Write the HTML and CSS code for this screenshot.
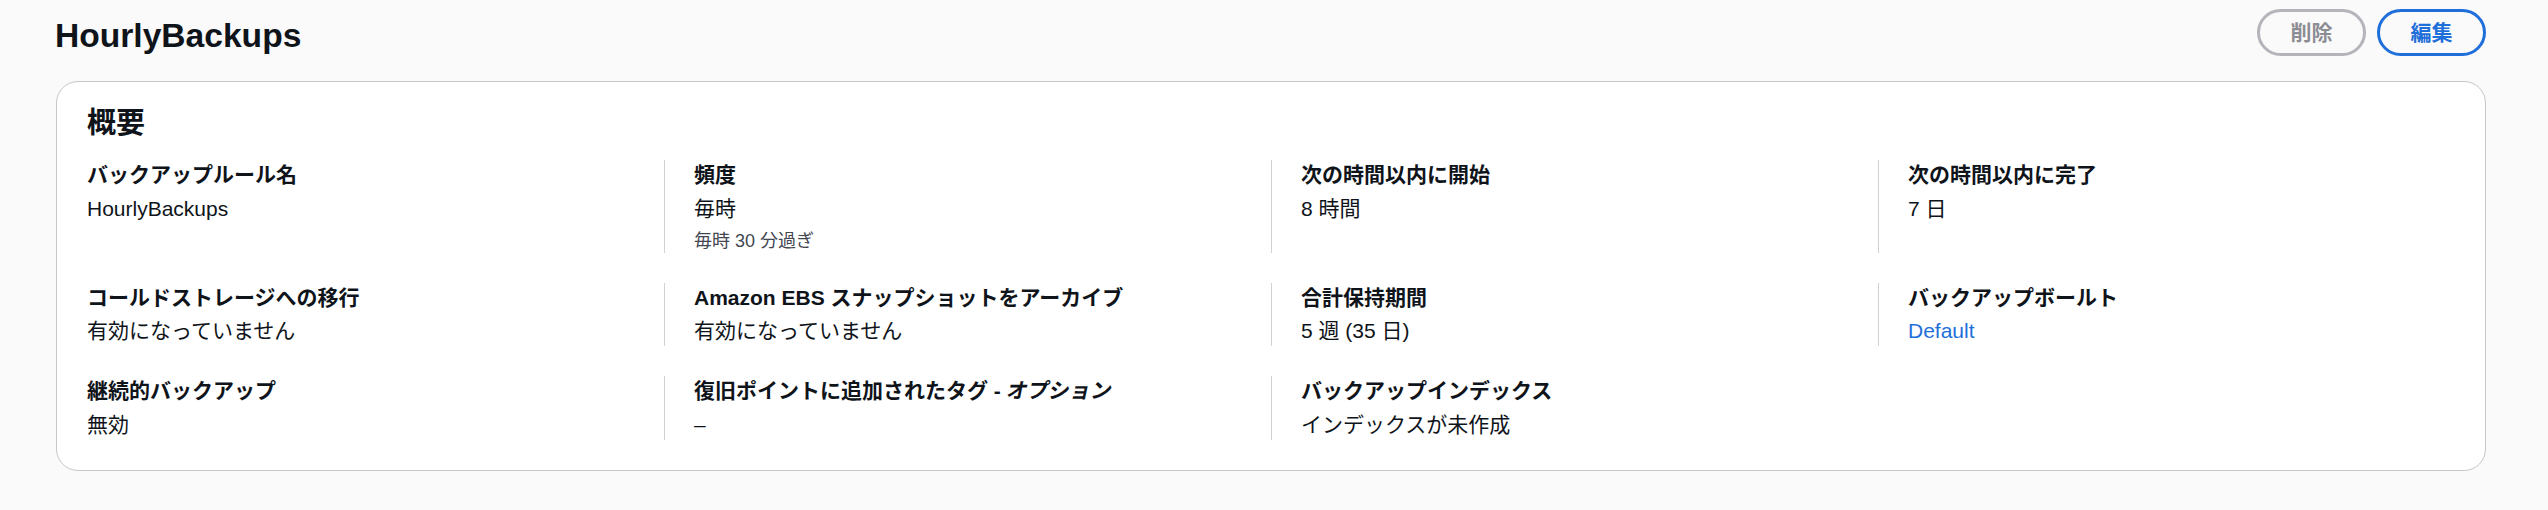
FILE: index.html
```html
<!DOCTYPE html>
<html lang="ja">
<head>
<meta charset="utf-8">
<title>HourlyBackups</title>
<link rel="stylesheet" href="styles.css">
</head>
<body>
<div class="page">
  <header class="page-header">
    <h1 class="title">HourlyBackups</h1>
    <div class="actions">
      <button class="btn btn-disabled" type="button">削除</button>
      <button class="btn btn-normal" type="button">編集</button>
    </div>
  </header>
  <section class="card">
    <h2 class="card-title">概要</h2>
    <div class="kv-grid">
      <div class="kv">
        <div class="kv-label">バックアップルール名</div>
        <div class="kv-value">HourlyBackups</div>
      </div>
      <div class="kv">
        <div class="kv-label">頻度</div>
        <div class="kv-value">毎時</div>
        <div class="kv-sub">毎時 30 分過ぎ</div>
      </div>
      <div class="kv">
        <div class="kv-label">次の時間以内に開始</div>
        <div class="kv-value">8 時間</div>
      </div>
      <div class="kv">
        <div class="kv-label">次の時間以内に完了</div>
        <div class="kv-value">7 日</div>
      </div>
      <div class="kv">
        <div class="kv-label">コールドストレージへの移行</div>
        <div class="kv-value">有効になっていません</div>
      </div>
      <div class="kv">
        <div class="kv-label">Amazon EBS スナップショットをアーカイブ</div>
        <div class="kv-value">有効になっていません</div>
      </div>
      <div class="kv">
        <div class="kv-label">合計保持期間</div>
        <div class="kv-value">5 週 (35 日)</div>
      </div>
      <div class="kv">
        <div class="kv-label">バックアップボールト</div>
        <div class="kv-value"><a class="link" href="#">Default</a></div>
      </div>
      <div class="kv">
        <div class="kv-label">継続的バックアップ</div>
        <div class="kv-value">無効</div>
      </div>
      <div class="kv">
        <div class="kv-label">復旧ポイントに追加されたタグ - <span class="opt">オプション</span></div>
        <div class="kv-value">–</div>
      </div>
      <div class="kv">
        <div class="kv-label">バックアップインデックス</div>
        <div class="kv-value">インデックスが未作成</div>
      </div>
    </div>
  </section>
</div>
</body>
</html>
```

FILE: styles.css
```css
html, body {
  margin: 0;
  background: #fafafa;
}

body {
  font-family: "Liberation Sans", "Noto Sans CJK JP", sans-serif;
  color: #0f141a;
}

.page {
  padding: 9px 62px 0 56px;
}

.page-header {
  display: flex;
  justify-content: space-between;
  align-items: flex-start;
}

.title {
  margin: 7px 0 0 -1px;
  font-size: 33.6px;
  line-height: 40px;
  font-weight: 700;
}

.actions {
  display: flex;
  gap: 11px;
}

.btn {
  box-sizing: border-box;
  height: 47px;
  padding: 0 30.5px;
  border: 3px solid;
  border-radius: 999px;
  background: transparent;
  font-family: "Liberation Sans", "Noto Sans CJK JP", sans-serif;
  font-size: 21px;
  line-height: 1;
  font-weight: 700;
}

.btn-disabled {
  border-color: #b4b4bb;
  color: #8c8c94;
}

.btn-normal {
  border-color: #1f6fdb;
  color: #1f6fdb;
}

.card {
  margin-top: 25px;
  background: #ffffff;
  border: 1px solid #c6c6cd;
  border-radius: 22px;
  padding: 0 0 30px;
}

.card-title {
  margin: 0;
  padding: 23px 30px 19px;
  font-size: 29px;
  line-height: 36px;
  font-weight: 700;
}

.kv-grid {
  display: grid;
  grid-template-columns: repeat(4, 1fr);
  row-gap: 30px;
}

.kv {
  border-left: 1px solid #d1d1d6;
  padding: 0 20px 0 29px;
}

.kv:nth-child(4n+1) {
  border-left-color: transparent;
}

.kv-label {
  font-size: 21px;
  line-height: 30px;
  font-weight: 700;
  margin-bottom: 3.5px;
}

.opt {
  display: inline-block;
  font-style: normal;
  transform: skewX(-12deg);
}

.kv-value {
  font-size: 21px;
  line-height: 30px;
}

.kv-sub {
  margin-top: 5px;
  font-size: 18px;
  line-height: 24px;
  color: #424650;
}

.link {
  color: #1f6fdb;
  text-decoration: none;
}
```
